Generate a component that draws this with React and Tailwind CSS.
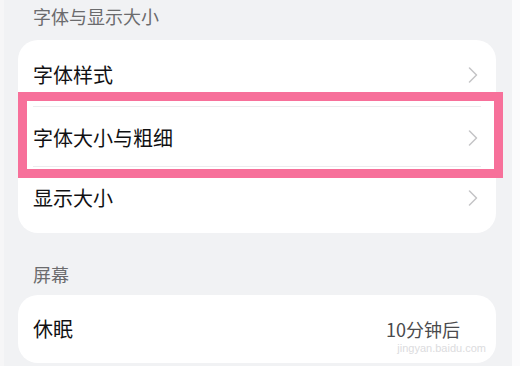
const font = { fontFamily: '"Noto Sans CJK SC", "Noto Sans", sans-serif' };

function Chevron() {
  return (
    <svg width="10" height="16" viewBox="0 0 10 16" fill="none" className="shrink-0">
      <polyline points="1.5,1 8.5,8 1.5,15" stroke="#c4c4c6" strokeWidth="1.5" strokeLinecap="round" strokeLinejoin="round" />
    </svg>
  );
}

function Row({ label, className = '' }) {
  return (
    <div className={`flex items-center justify-between pl-[15px] pr-[18px] ${className}`}>
      <span className="text-[20px] leading-[24px] text-[#111113]">{label}</span>
      <Chevron />
    </div>
  );
}

export default function App() {
  return (
    <div className="w-[520px] h-[366px] flex bg-[#f1f2f4] overflow-hidden" style={font}>
      <div className="w-[512px] pl-[18px] pr-[16px] border-l-[4px] border-[#f6f6f7]">
        <div className="h-[40px] pt-[6px] pl-[11px] text-[18px] leading-[20px] text-[#6b6b6d]">
          字体与显示大小
        </div>

        <div className="relative -ml-[4px] bg-white rounded-[20px] h-[193px] flex flex-col">
          <Row label="字体样式" className="h-[66px] pt-[4px]" />
          <div className="mx-[15px] h-px bg-[#ececee]" />
          <Row label="字体大小与粗细" className="h-[60px] pt-[2px]" />
          <div className="mx-[15px] h-px bg-[#ececee]" />
          <Row label="显示大小" className="h-[66px] pb-[4px]" />

          <div className="absolute left-0 top-[52px] w-[485px] h-[86px] border-[9px] border-[#f7709a]" />
        </div>

        <div className="h-[62px] pt-[31px] pl-[11px] text-[18px] leading-[20px] text-[#6b6b6d]">
          屏幕
        </div>

        <div className="relative -ml-[4px] bg-white rounded-[20px] h-[68px] flex items-center justify-between pl-[15px] pr-[36px]">
          <span className="text-[20px] leading-[24px] text-[#111113]">休眠</span>
          <span className="text-[18px] leading-[22px] text-[#4a4a4c]">10分钟后</span>

          <span
            className="absolute right-[10px] top-[47px] text-[11px] leading-[13px] text-[#dcdcde]"
            style={{ fontFamily: '"Liberation Sans", sans-serif' }}
          >
            jingyan.baidu.com
          </span>
        </div>
      </div>
      <div className="flex-1 bg-[#fbfbfc]" />
    </div>
  );
}
